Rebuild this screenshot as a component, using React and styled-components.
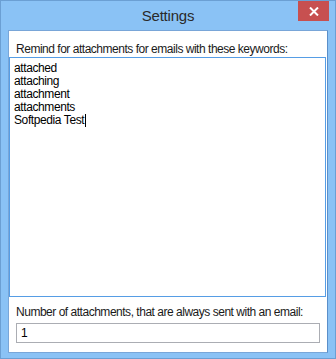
import React from 'react';
import styled, { createGlobalStyle } from 'styled-components';

const FRAME_BLUE = '#8ac2f5';
const FRAME_EDGE = '#6b9fd3';
const FOCUS_BLUE = '#569de5';
const TEXT_DARK = '#1a1a1a';
const UI_FONT = `"Liberation Sans", Arial, sans-serif`;

const GlobalStyle = createGlobalStyle`
  html, body {
    margin: 0;
    padding: 0;
    background: #ffffff;
  }
`

const Window = styled.div`
  width: 336px;
  height: 359px;
  box-sizing: border-box;
  background-color: ${ FRAME_BLUE };
  border: 1px solid ${ FRAME_EDGE };
  display: flex;
  flex-direction: column;
  font-family: ${ UI_FONT };
`

const TitleBar = styled.div`
  height: 29px;
  display: grid;
  grid-template-columns: 1fr auto 1fr;
  align-items: start;
`

const Title = styled.div`
  grid-column: 2;
  font-size: 15px;
  line-height: 29px;
  color: #2a2a2a;
  letter-spacing: -0.2px;
`

const CloseButton = styled.div`
  grid-column: 3;
  justify-self: end;
  margin-right: 6px;
  width: 31px;
  height: 20px;
  background-color: #c75050;
  display: flex;
  align-items: center;
  justify-content: center;
`

const Client = styled.div`
  flex: 1;
  margin: 0 7px 7px;
  background-color: #ffffff;
  border: 1px solid #79a6d8;
  border-right-color: #5b8fc9;
  display: flex;
  flex-direction: column;
`

const Label = styled.div`
  font-size: 12px;
  line-height: 15px;
  letter-spacing: -0.48px;
  color: ${ TEXT_DARK };
  padding: ${ p => p.pad };
  white-space: nowrap;
`

const KeywordBox = styled.div`
  height: 240px;
  box-sizing: border-box;
  margin-right: 1px;
  border: 1px solid ${ FOCUS_BLUE };
  padding: 4px 4px;
  font-size: 12px;
  line-height: 13px;
  letter-spacing: -0.4px;
  color: #000000;
`

const KeywordLine = styled.div`
  white-space: nowrap;
`

const Caret = styled.span`
  display: inline-block;
  width: 1px;
  height: 13px;
  background: #000;
  vertical-align: top;
  margin-left: 1px;
`

const NumberInput = styled.div`
  margin: 0 7px 9px;
  height: 20px;
  box-sizing: border-box;
  border: 1px solid #abadb3;
  padding: 0 4px;
  font-size: 12px;
  line-height: 18px;
  color: #000000;
`

const keywords = ['attached', 'attaching', 'attachment', 'attachments'];

export default function App() {
  return (
    <>
      <GlobalStyle />
      <Window>
        <TitleBar>
          <Title>Settings</Title>
          <CloseButton>
            <svg width="10" height="9" viewBox="0 0 10 9">
              <path d="M1 0.5 L9 8.5 M9 0.5 L1 8.5" stroke="#ffffff" strokeWidth="2" />
            </svg>
          </CloseButton>
        </TitleBar>
        <Client>
          <Label pad="11px 7px 0 7px">
            Remind for attachments for emails with these keywords:
          </Label>
          <KeywordBox>
            {keywords.map(k => <KeywordLine key={k}>{k}</KeywordLine>)}
            <KeywordLine>Softpedia Test<Caret /></KeywordLine>
          </KeywordBox>
          <Label pad="8px 7px 3px 7px">
            Number of attachments, that are always sent with an email:
          </Label>
          <NumberInput>1</NumberInput>
        </Client>
      </Window>
    </>
  );
}
